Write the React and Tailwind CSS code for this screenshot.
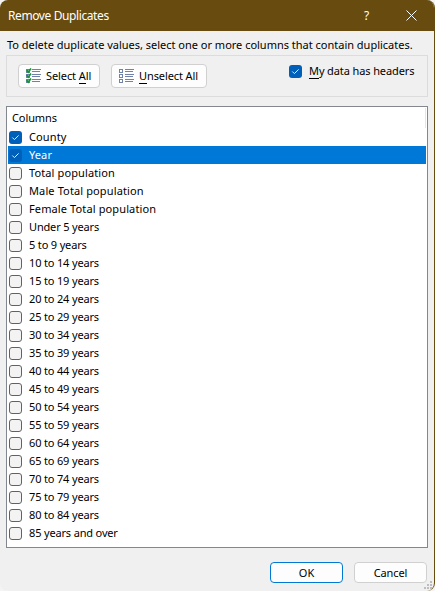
import React from "react";

const columns = [
  "County", "Year", "Total population", "Male Total population", "Female Total population",
  "Under 5 years", "5 to 9 years", "10 to 14 years", "15 to 19 years", "20 to 24 years",
  "25 to 29 years", "30 to 34 years", "35 to 39 years", "40 to 44 years", "45 to 49 years",
  "50 to 54 years", "55 to 59 years", "60 to 64 years", "65 to 69 years", "70 to 74 years",
  "75 to 79 years", "80 to 84 years", "85 years and over",
];

function Checkbox({ checked }) {
  if (!checked) {
    return <span className="size-[13px] shrink-0 rounded-[3px] border border-[#626262] bg-[#f3f3f3]" />;
  }
  return (
    <span className="size-[13px] shrink-0 rounded-[3px] bg-[#005fb8]">
      <svg viewBox="0 0 13 13" className="block size-[13px]" fill="none" stroke="#e3eef8" strokeWidth="1">
        <path d="M3.3 6.5 5.4 8.6 9.6 4.4" />
      </svg>
    </span>
  );
}

function ListIcon({ checked }) {
  return (
    <svg viewBox="0 0 16 16" className="size-4 shrink-0" fill="none" shapeRendering="crispEdges">
      {[1, 6, 11].map((y) => (
        <g key={y}>
          <rect x="0.5" y={y + 0.5} width="3" height="3" stroke="#6f82a8" fill="#fff" />
          <path d={`M6 ${y + 0.5}h9M6 ${y + 2.5}h8`} stroke="#7182a6" strokeWidth="1" />
          {checked && (
            <path d={`M0.7 ${y + 1}l1.6 2L5 ${y - 0.5}`} stroke="#16933a" strokeWidth="1.7" shapeRendering="auto" />
          )}
        </g>
      ))}
    </svg>
  );
}

const key = "border-b border-black";

export default function App() {
  return (
    <div className="h-[591px] w-[435px] overflow-hidden bg-[#f4f4f4] font-['Noto_Sans','Open_Sans',sans-serif] text-[11px] leading-[18px] tracking-[0.2px] text-black">
      <div className="flex h-full flex-col overflow-hidden rounded-[8px] border-r border-r-[#674b0f] bg-[#f0f0f0]">
        <header className="flex h-[31px] shrink-0 items-center bg-[#674b0f] pl-2 text-white">
          <h1 className="grow text-[12px] tracking-[-0.4px]">Remove Duplicates</h1>
          <span className="mr-[35px] w-[7px] text-[12px]">?</span>
          <svg viewBox="0 0 11 11" className="mr-[17px] size-[11px]" stroke="#fff" strokeWidth="1" fill="none">
            <path d="M.5.5l10 10M10.5.5l-10 10" />
          </svg>
        </header>

        <p className="mt-[5px] h-[19px] shrink-0 pl-[7px] tracking-[-0.01px] whitespace-nowrap">
          To delete duplicate values, select one or more columns that contain duplicates.
        </p>

        <section className="mx-[6px] flex h-[42px] shrink-0 items-start border border-[#dcdcdc] pt-2 pl-[11px]">
          <button className="flex h-6 w-[82px] items-center gap-1 rounded-[4px] border border-[#d0d0d0] bg-[#fdfdfd] pl-[7px] tracking-[-0.1px] whitespace-nowrap">
            <ListIcon checked />
            <span className="leading-[14px]">Select <span className={key}>A</span>ll</span>
          </button>
          <button className="ml-[11px] flex h-6 w-[96px] items-center gap-1 rounded-[4px] border border-[#d0d0d0] bg-[#fdfdfd] pl-[7px] tracking-[-0.1px] whitespace-nowrap">
            <ListIcon />
            <span className="leading-[14px]"><span className={key}>U</span>nselect All</span>
          </button>
          <label className="ml-[82px] flex h-[14px] items-center gap-[7px] tracking-[-0.11px] whitespace-nowrap">
            <Checkbox checked />
            <span className="leading-[14px]"><span className={key}>M</span>y data has headers</span>
          </label>
        </section>

        <section className="mx-[6px] mt-[9px] flex h-[442px] shrink-0 flex-col border border-[#828790] bg-white px-px pt-px">
          <div className="flex h-5 shrink-0 items-center border-r border-[#e5e5e5] pl-[4px] tracking-[-0.1px]">
            Columns
          </div>
          <ul>
            {columns.map((name, i) => (
              <li key={name} className={`flex h-[18px] items-center gap-[7px] pl-px ${i === 1 ? "bg-[#0078d7] text-white" : ""}`}>
                <Checkbox checked={i < 2} />
                <span className={`whitespace-nowrap ${i > 4 ? "tracking-[-0.16px]" : "tracking-[0.12px]"}`}>{name}</span>
              </li>
            ))}
          </ul>
        </section>

        <footer className="mt-[14px] flex gap-[11px] pl-[270px]">
          <button className="h-[21px] w-[73px] rounded-[4px] border border-[#0078d4] bg-[#fdfdfd] leading-[18px] tracking-[0px]">OK</button>
          <button className="h-[21px] w-[73px] rounded-[4px] border border-[#d0d0d0] bg-[#fdfdfd] leading-[18px] tracking-[-0.1px]">Cancel</button>
        </footer>
        <svg viewBox="0 0 8 8" className="mt-[-2px] mr-[2px] ml-auto size-2 shrink-0" fill="#bdbdbd">
          <path d="M6 0h2v2h-2zM3 3h2v2h-2zM6 3h2v2h-2zM0 6h2v2h-2zM3 6h2v2h-2zM6 6h2v2h-2z" />
        </svg>
      </div>
    </div>
  );
}
